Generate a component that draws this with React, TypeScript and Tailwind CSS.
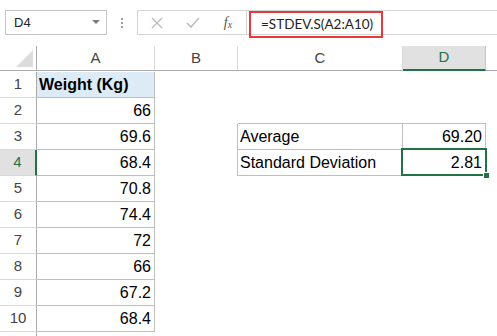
import React from 'react';

const weights = ['66', '69.6', '68.4', '70.8', '74.4', '72', '66', '67.2', '68.4'];

const App: React.FC = () => {
  const rows = Array.from({ length: 11 }, (_, i) => i + 1);

  return (
    <div className="w-[497px] h-[336px] overflow-hidden bg-white font-['Liberation_Sans',Arial,sans-serif] text-[#222]">
      {/* Toolbar: name box + formula bar */}
      <div className="flex items-start h-[46px] pt-[10px] pl-[5px]">
        <div className="flex items-center justify-between w-[102px] h-[25px] border border-[#c6c6c6] pl-[8px] pr-[6px] text-[13px] text-[#222]">
          <span>D4</span>
          <svg width="8" height="5" viewBox="0 0 8 5">
            <path d="M0 0 L8 0 L4 4 Z" fill="#7a7a7a" />
          </svg>
        </div>
        <div className="flex flex-col items-center justify-center gap-[2px] w-[30px] h-[25px]">
          <div className="w-[2px] h-[2px] bg-[#a0a0a0]" />
          <div className="w-[2px] h-[2px] bg-[#a0a0a0]" />
          <div className="w-[2px] h-[2px] bg-[#a0a0a0]" />
        </div>
        <div className="flex items-center w-[110px] h-[25px] border border-[#d4d4d4]">
          <div className="flex items-center justify-center w-[38px]">
            <svg width="12" height="12" viewBox="0 0 12 12">
              <path d="M1 1 L11 11 M11 1 L1 11" stroke="#bdbdbd" strokeWidth="1.4" fill="none" />
            </svg>
          </div>
          <div className="flex items-center justify-center w-[34px]">
            <svg width="14" height="11" viewBox="0 0 14 11">
              <path d="M1 6 L5 10 L13 1" stroke="#bdbdbd" strokeWidth="1.6" fill="none" />
            </svg>
          </div>
          <div className="flex items-center justify-center w-[36px] font-['Liberation_Serif',serif] italic text-[14px] text-[#555]">
            f<span className="text-[10px] mt-[3px]">x</span>
          </div>
        </div>
        <div className="flex-1 h-[25px] border-t border-b border-[#d4d4d4] -ml-px">
          <div className="ml-[3px] w-[134px] h-[27px] border-2 border-[#e8383d] flex items-center pl-[10px] pb-[1px] font-['Lato',sans-serif] text-[13.5px] text-[#222]">
            =STDEV.S(A2:A10)
          </div>
        </div>
      </div>

      {/* Sheet grid */}
      <div className="grid grid-cols-[37px_118px_83px_165px_83px_1fr] auto-rows-[26px]">
        {/* Column header row */}
        <div className="h-[25px] border-r border-b border-[#ababab] flex items-end justify-end pr-[3px] pb-[3px]">
          <svg width="17" height="17" viewBox="0 0 17 17">
            <path d="M17 0 L17 17 L0 17 Z" fill="#dcdcdc" />
          </svg>
        </div>
        <div className="h-[25px] border-r border-r-[#dadada] border-b border-b-[#ababab] flex items-center justify-center text-[15px] text-[#444]">A</div>
        <div className="h-[25px] border-r border-r-[#dadada] border-b border-b-[#ababab] flex items-center justify-center text-[15px] text-[#444]">B</div>
        <div className="h-[25px] border-r border-r-[#dadada] border-b border-b-[#ababab] flex items-center justify-center text-[15px] text-[#444]">C</div>
        <div className="h-[25px] bg-[#e1e1e1] border-r border-r-[#c6c6c6] border-b-2 border-b-[#217346] flex items-center justify-center text-[15px] text-[#217346]">D</div>
        <div className="h-[25px] border-b border-[#ababab]" />

        {rows.map((r) => (
          <React.Fragment key={r}>
            {/* Row header */}
            {r === 4 ? (
              <div className="bg-[#e1e1e1] border-r-2 border-r-[#217346] border-b border-b-[#dadada] flex items-center justify-center text-[15px] text-[#217346]">
                {r}
              </div>
            ) : (
              <div className="border-r border-r-[#ababab] border-b border-b-[#dadada] flex items-center justify-center text-[15px] text-[#444]">
                {r <= 10 ? r : ''}
              </div>
            )}

            {/* Column A */}
            {r === 1 ? (
              <div className="bg-[#ddebf7] border-r border-b border-[#bfbfbf] flex items-center pl-[2px] text-[16px] font-bold text-black">
                Weight (Kg)
              </div>
            ) : r <= 10 ? (
              <div className="border-r border-b border-[#bfbfbf] flex items-center justify-end pr-[3px] text-[16px] text-black">
                {weights[r - 2]}
              </div>
            ) : (
              <div />
            )}

            {/* Column B */}
            {r === 3 || r === 4 ? <div className="border-r border-[#bfbfbf]" /> : <div />}

            {/* Column C */}
            {r === 2 ? (
              <div className="border-b border-[#bfbfbf]" />
            ) : r === 3 || r === 4 ? (
              <div className="border-r border-b border-[#bfbfbf] flex items-center pl-[2px] text-[16px] text-black">
                {r === 3 ? 'Average' : 'Standard Deviation'}
              </div>
            ) : (
              <div />
            )}

            {/* Column D */}
            {r === 2 ? (
              <div className="border-b border-[#bfbfbf]" />
            ) : r === 3 ? (
              <div className="border-r border-b border-[#bfbfbf] flex items-center justify-end pr-[3px] text-[16px] text-black">
                69.20
              </div>
            ) : r === 4 ? (
              <div className="relative border-r border-b border-[#bfbfbf] flex items-center justify-end pr-[3px] text-[16px] text-black">
                2.81
                <div className="absolute -left-[2px] -top-[2px] w-[86px] h-[28px] border-2 border-[#217346]" />
                <div className="absolute left-[80px] top-[22px] w-[7px] h-[7px] bg-[#217346] border border-white" />
              </div>
            ) : (
              <div />
            )}

            <div />
          </React.Fragment>
        ))}
      </div>
    </div>
  );
};

export default App;
